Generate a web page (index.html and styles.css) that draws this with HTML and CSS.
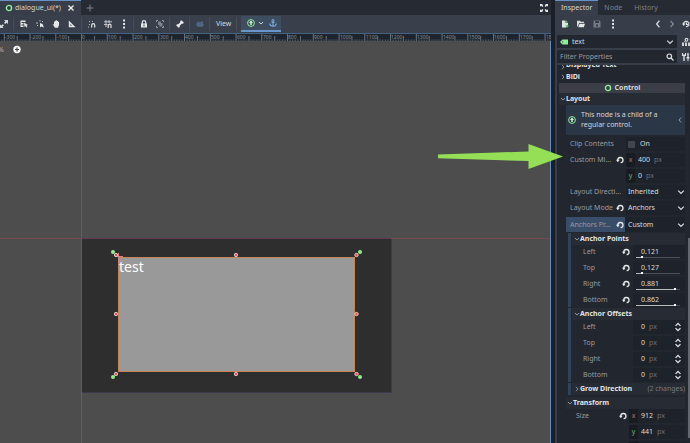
FILE: index.html
```html
<!DOCTYPE html>
<html lang="en">
<head>
<meta charset="utf-8">
<title>dialogue_ui(*)</title>
<link rel="stylesheet" href="styles.css">
</head>
<body>
<svg class="defs" aria-hidden="true">
  <symbol id="ring" viewBox="0 0 8 8"><circle cx="4" cy="4" r="2.6" fill="none" stroke="#8eef97" stroke-width="1.4"/></symbol>
  <symbol id="down" viewBox="0 0 8 8"><path d="M1.200 2.600 4 5.400l2.800-2.800" fill="none" stroke="currentColor" stroke-width="1.300"/></symbol>
  <symbol id="right" viewBox="0 0 8 8"><path d="M2.600 1 5.400 4 2.600 7" fill="none" stroke="currentColor" stroke-width="1.200"/></symbol>
  <symbol id="left" viewBox="0 0 8 8"><path d="M5.400.8 2.600 4l2.800 3.200" fill="none" stroke="currentColor" stroke-width="1.300"/></symbol>
  <symbol id="revert" viewBox="0 0 8 8"><path d="M1.800 4.300A2.600 2.600 0 1 1 4.600 6.700" fill="none" stroke="#e8e9ea" stroke-width="1.300"/><path d="M0 3.800h3.700L1.800 6.200z" fill="#e8e9ea"/></symbol>
  <symbol id="spin" viewBox="0 0 8 10"><path d="M1.500 3.900 4 1.500l2.500 2.400M1.500 6.100 4 8.500l2.500-2.400" fill="none" stroke="#dcdee0" stroke-width="1.300"/></symbol>
  <symbol id="anchored" viewBox="0 0 8 8"><circle cx="4" cy="4" r="3.400" fill="none" stroke="#8eef97" stroke-width="1"/><path d="M4 1.500 6 4H4.700v2H3.300V4H2z" fill="#d9f5dc"/></symbol>
  <symbol id="dots" viewBox="0 0 8 10"><path d="M3.100.6h1.900v1.900H3.100zM3.100 4.100h1.900V6H3.100zM3.100 7.600h1.900v1.900H3.100z" fill="#e8e9ea"/></symbol>
</svg>
<div class="app">
  <main class="editor">
    <nav class="tabs">
      <button class="tab active"><svg class="icon"><use href="#ring"/></svg>dialogue_ui(*)<svg class="icon close" viewBox="0 0 8 8"><path d="m1.500 1.500 5 5m0-5-5 5" stroke="#f0f0f0" stroke-width="1.300"/></svg></button>
      <button class="add" aria-label="New scene"><svg class="icon" viewBox="0 0 8 8"><path d="M4 .5v7M.5 4h7" stroke="#7f838a"/></svg></button>
      <button class="expand" aria-label="Distraction free mode"><svg class="icon" viewBox="0 0 8 8"><path d="M0 0h3L2.200.8l1.300 1.300-1 1L1 1.800l-1 1zM8 0v2.800l-1-1-1.500 1.300-1-1L5.800.8 5 0zM0 8V5.200l1 1 1.500-1.300 1 1L2.200 7.200 3 8zM8 8H5l.8-.8-1.300-1.300 1-1L7 6.200l1-1z" fill="#e6e7e8"/></svg></button>
    </nav>
    <div class="toolbar">
      <button aria-label="Scale"><svg class="icon" viewBox="0 0 8 8"><path d="M4 0h4v4L6.700 2.700 5.200 4 4 2.800l1.400-1.400zM0 8V4.500l1.200 1 1.600-1.300L4 5.400 2.400 6.800 3.500 8z" fill="#d6d8da"/></svg></button>
      <i class="sep"></i>
      <button aria-label="List select"><svg class="icon" viewBox="0 0 8 8"><path d="M.5.500h5v1.500h-5zM.5 3h3v1.500h-3zM.5 5.500h3V7h-3zM.5.500h1V7h-1zM4 2.500 8 5 6.500 5.500 7.500 7l-1 .5L5.500 6l-1 1z" fill="#e6e7e8"/></svg></button>
      <button aria-label="Pivot"><svg class="icon" viewBox="0 0 8 8"><path d="M4 3v4.500L5.200 6.500 8 7.500 6.500 4z" fill="#e6e7e8"/><path d="M0 3h2M4 0v1.500M2 5l-1 1M6 2l1-1" stroke="#b7babf"/></svg></button>
      <button aria-label="Pan"><svg class="icon" viewBox="0 0 8 8"><path d="M.5 4 2 4.500V1.500h1V.7h1V.3h1v.6h1v.9h1V5L6 7.700H3z" fill="#e6e7e8"/></svg></button>
      <button aria-label="Ruler"><svg class="icon" viewBox="0 0 8 8"><path fill-rule="evenodd" d="M.8.500 7.500 7.300H.8zM2.300 4v1.800H4z" fill="#e6e7e8"/></svg></button>
      <i class="sep"></i>
      <button aria-label="Smart snap"><svg class="icon" viewBox="0 0 8 8"><path d="M3.700 7.500V5.200a1.500 1.500 0 0 1 3 0v2.300" fill="none" stroke="#e6e7e8" stroke-width="1.200"/><path d="M1 1h1v1H1zM4 1h1v1H4zM1 4h1v1H1zM0 6.500h1v1H0z" fill="#b9bcc0"/></svg></button>
      <button aria-label="Grid snap"><svg class="icon" viewBox="0 0 8 8"><path d="M2 0v7M5 0v3M0 1.800h8M0 4.500h3.500" stroke="#c1c4c8"/><path d="M4.200 8V5.500a1.400 1.400 0 0 1 2.800 0V8" fill="none" stroke="#e6e7e8" stroke-width="1.200"/></svg></button>
      <button aria-label="Snapping options"><svg class="icon tall"><use href="#dots"/></svg></button>
      <i class="sep"></i>
      <button aria-label="Lock"><svg class="icon" viewBox="0 0 8 8"><path d="M2.300 4V2.300a1.700 1.700 0 0 1 3.400 0V4" fill="none" stroke="#e6e7e8" stroke-width="1.200"/><path fill-rule="evenodd" d="M1 3.500h6v4H1zm2.500 1v1.800h1V4.500z" fill="#e6e7e8"/></svg></button>
      <button aria-label="Group"><svg class="icon" viewBox="0 0 8 8"><path d="M.5 2V.5H2M6 .5h1.500V2M.5 6v1.500H2M6 7.500h1.500V6" fill="none" stroke="#9599a1"/><path d="M2 1.500h3V3h1.500v3.500H3.500V5H2z" fill="#7d828c"/></svg></button>
      <i class="sep"></i>
      <button aria-label="Skeleton"><svg class="icon" viewBox="0 0 8 8"><path d="m2 6 4-4" stroke="#f2f2f2" stroke-width="1.800"/><circle cx="1.500" cy="5.300" r="1.100" fill="#f2f2f2"/><circle cx="2.700" cy="6.500" r="1.100" fill="#f2f2f2"/><circle cx="5.300" cy="1.500" r="1.100" fill="#f2f2f2"/><circle cx="6.500" cy="2.700" r="1.100" fill="#f2f2f2"/></svg></button>
      <i class="sep"></i>
      <button aria-label="Bone rendering"><svg class="icon" viewBox="0 0 8 8"><path d="M0 4 1.500 2 3 1.500 4 2.500 5 1.500h2v2l1 1-1 2-3 .5-3-.5z" fill="#4b6689"/></svg></button>
      <i class="sep"></i>
      <button class="view">View</button>
      <i class="sep"></i>
      <div class="anchor-tools">
        <button aria-label="Anchor preset"><svg class="icon"><use href="#anchored"/></svg><svg class="caret"><use href="#down"/></svg></button>
        <button aria-label="Anchor mode"><svg class="icon" viewBox="0 0 8 8"><path d="M4 2.500v4.700M2.300 3.300h3.400M.8 4.500c.2 2 1.700 2.700 3.200 2.700s3-.7 3.200-2.700" fill="none" stroke="#79ace8" stroke-width="1.100"/><circle cx="4" cy="1.500" r="1" fill="none" stroke="#79ace8"/></svg></button>
      </div>
    </div>
    <svg class="ruler" aria-label="Ruler">
      <defs><pattern id="ticks" x="3.800" width="25.750" height="8" patternUnits="userSpaceOnUse">
        <path d="M.5 0v8" stroke="#6c747d"/><path d="M13.400 2v6" stroke="#68717a"/>
        <path d="M3.100 5.500V8M5.700 5.500V8M8.200 5.500V8M10.800 5.500V8M16 5.500V8M18.500 5.500V8M21.100 5.500V8M23.700 5.500V8" stroke="#6a727b" stroke-width=".8"/>
      </pattern></defs>
      <rect width="100%" height="8" fill="url(#ticks)"/>
      <g><text x="5" y="5">-300</text><text x="31" y="5">-200</text><text x="57" y="5">-100</text><text x="82" y="5">0</text><text x="108" y="5">100</text><text x="134" y="5">200</text><text x="160" y="5">300</text><text x="185" y="5">400</text><text x="211" y="5">500</text><text x="237" y="5">600</text><text x="263" y="5">700</text><text x="288" y="5">800</text><text x="314" y="5">900</text><text x="340" y="5">1000</text><text x="366" y="5">1100</text><text x="391" y="5">1200</text><text x="417" y="5">1300</text><text x="443" y="5">1400</text><text x="469" y="5">1500</text><text x="494" y="5">1600</text><text x="520" y="5">1700</text><text x="546" y="5">1800</text></g>
    </svg>
    <div class="canvas">
      <svg class="scene">
        <path d="M81.500 0v402" stroke="#5d6351"/>
        <rect x="82" y="197" width="309" height="154" fill="#2e2e2e"/>
        <path d="M82 351.500h309.500V197" fill="none" stroke="#3c3a4b"/>
        <path d="M0 197.500h82M391 197.500h160" stroke="#754a50"/><path d="M82 197.500h309" stroke="#633850"/>
        <rect x="118.500" y="216.500" width="236" height="114" fill="#999" stroke="#c78558"/>
        <path d="M115 215.500h8M118.500 212v10" stroke="#d98484"/>
        <g fill="#8eef8b"><circle cx="113" cy="211" r="2"/><circle cx="360" cy="211" r="2"/><circle cx="113" cy="336" r="2"/><circle cx="360" cy="336" r="2"/></g>
        <g fill="#f0524f" stroke="#d9c6c6" stroke-width="1"><circle cx="116" cy="214" r="1.700"/><circle cx="236" cy="214" r="1.700"/><circle cx="356.500" cy="214" r="1.700"/><circle cx="116" cy="273" r="1.700"/><circle cx="356.500" cy="273" r="1.700"/><circle cx="116" cy="333" r="1.700"/><circle cx="236" cy="333" r="1.700"/><circle cx="356.500" cy="333" r="1.700"/></g>
        <text class="test" x="119" y="231">test</text>
        <text class="zoom" x="-2" y="11">%</text>
        <circle cx="17" cy="8.500" r="3.700" fill="#f4f4f4"/><path d="M17 6.500v4M15 8.500h4" stroke="#484848" stroke-width="1.200"/>
      </svg>
      <svg class="arrow" viewBox="0 0 126 26"><path d="M0 10.500 90.500 7.500V0L125 12.500 90.500 25v-8L0 14.300z" fill="#95df57"/></svg>
    </div>
  </main>

  <aside class="inspector">
    <nav class="tabs">
      <button class="tab active">Inspector</button><button class="tab">Node</button><button class="tab">History</button>
    </nav>
    <div class="panel">
      <div class="resource">
        <button aria-label="New resource"><svg class="icon" viewBox="0 0 8 8"><path d="M1 .5h3.500V3H7v2H5v2.500H1z" fill="#e2e3e5"/><path d="M5 .5 7 2.500H5zM5.500 4.500h1v1h1v1h-1v1h-1v-1h-1v-1h1z" fill="#77e887"/></svg></button>
        <button aria-label="Open resource"><svg class="icon" viewBox="0 0 8 8"><path d="M0 7V.8h3l.8 1H7V3H2.200L1 6z" fill="#d8dadc"/><path d="M2.500 3.800H8L6.800 7.200H1.200z" fill="#e5e6e7"/></svg></button>
        <button aria-label="Save resource"><svg class="icon" viewBox="0 0 8 8"><path fill-rule="evenodd" d="M.5.500h6l1 1v6h-7zM2 1v2h4V1zM3 4.500v2h2v-2z" fill="#777c86"/></svg></button>
        <button aria-label="Extra options"><svg class="icon tall"><use href="#dots"/></svg></button>
        <span class="grow"></span>
        <button aria-label="Previous"><svg class="icon"><use href="#left"/></svg></button>
        <button class="dim" aria-label="Next"><svg class="icon"><use href="#right"/></svg></button>
        <button aria-label="History"><svg class="icon" viewBox="0 0 8 8"><path d="M1.500 4A2.700 2.700 0 1 1 4 6.700M4.500 2.500v2H6" fill="none" stroke="#e0e1e3" stroke-width="1.200"/><path d="M0 3.500h3.500L1.700 6z" fill="#e0e1e3"/></svg></button>
      </div>
      <div class="pick">
        <button class="field object"><svg class="icon" viewBox="0 0 8 8"><path fill-rule="evenodd" d="M0 4 2.500 1.500H8v5H2.500zM2.200 3.500v1h1v-1z" fill="#8eef97"/></svg>text<span class="grow"></span><svg class="icon"><use href="#down"/></svg></button>
        <button aria-label="Documentation"><svg class="icon" viewBox="0 0 8 8"><circle cx="4.500" cy="1.800" r="1.400" fill="none" stroke="#dfe0e2" stroke-width="1.100"/><path d="M0 4.500h2V8H0zM3 4.500h2V8H3zM6 4.500h2V8H6zM2 3.500 3.500 3l-1 1.500z" fill="#cfd1d4"/></svg></button>
      </div>
      <div class="pick">
        <label class="field"><input type="text" placeholder="Filter Properties" aria-label="Filter Properties"><svg class="icon" viewBox="0 0 8 8"><circle cx="3.300" cy="3.300" r="2.300" fill="none" stroke="#e0e1e3" stroke-width="1.200"/><path d="m5 5 2.500 2.500" stroke="#e0e1e3" stroke-width="1.300"/></svg></label>
        <button aria-label="Property tools"><svg class="icon" viewBox="0 0 8 8"><path d="M2 3v5M6 0v5" stroke="#dfe0e2" stroke-width="1.400"/><path d="M0 0h1v1.500h2V0h1v3H0zM4.500 4h3v1.500h-1V8h-1V5.500h-1z" fill="#dfe0e2"/></svg></button>
      </div>

      <div class="scroll">
        <div class="list">
          <h3 class="head cut"><svg class="caret"><use href="#right"/></svg>Displayed Text</h3>
          <h3 class="head first"><svg class="caret"><use href="#right"/></svg>BiDi</h3>
          <div class="category"><svg class="icon"><use href="#ring"/></svg>Control</div>
          <h3 class="head"><svg class="caret"><use href="#down"/></svg>Layout</h3>
          <div class="body">
            <div class="note"><svg class="icon"><use href="#anchored"/></svg><span>This node is a child of a regular control.</span><svg class="caret"><use href="#left"/></svg></div>
            <div class="rows">
              <div class="row"><label for="clip">Clip Contents</label><div class="value check"><input type="checkbox" id="clip"><span>On</span></div></div>
              <div class="row"><label for="minx">Custom Mi...</label><svg class="icon"><use href="#revert"/></svg><div class="value"><b class="x">x</b><input id="minx" value="400"><em>px</em></div></div>
              <div class="row"><span></span><div class="value"><b class="y">y</b><input aria-label="Minimum height" value="0" class="one"><em>px</em></div></div>
              <div class="row"><label for="dir">Layout Directi...</label><div class="value"><select id="dir"><option>Inherited</option></select><svg class="icon"><use href="#down"/></svg></div></div>
              <div class="row"><label for="mode">Layout Mode</label><svg class="icon"><use href="#revert"/></svg><div class="value"><select id="mode"><option>Anchors</option></select><svg class="icon"><use href="#down"/></svg></div></div>
              <div class="row selected"><label for="preset">Anchors Pr...</label><svg class="icon"><use href="#revert"/></svg><div class="value"><select id="preset"><option>Custom</option></select><svg class="icon"><use href="#down"/></svg></div></div>
            </div>
            <section class="group">
              <h3 class="head"><svg class="caret"><use href="#down"/></svg>Anchor Points</h3>
              <div class="rows">
                <div class="row"><label for="al">Left</label><svg class="icon"><use href="#revert"/></svg><div class="value slide"><input id="al" value="0.121"><i class="track"><i class="fill" style="width:15%"></i></i></div></div>
                <div class="row"><label for="at">Top</label><svg class="icon"><use href="#revert"/></svg><div class="value slide"><input id="at" value="0.127"><i class="track"><i class="fill" style="width:16%"></i></i></div></div>
                <div class="row"><label for="ar">Right</label><svg class="icon"><use href="#revert"/></svg><div class="value slide"><input id="ar" value="0.881"><i class="track"><i class="fill" style="width:92%"></i></i></div></div>
                <div class="row"><label for="ab">Bottom</label><svg class="icon"><use href="#revert"/></svg><div class="value slide"><input id="ab" value="0.862"><i class="track"><i class="fill" style="width:90%"></i></i></div></div>
              </div>
            </section>
            <section class="group">
              <h3 class="head"><svg class="caret"><use href="#down"/></svg>Anchor Offsets</h3>
              <div class="rows">
                <div class="row"><label for="ol">Left</label><div class="value offset"><input id="ol" value="0" class="one"><em>px</em><svg class="icon tall"><use href="#spin"/></svg></div></div>
                <div class="row"><label for="ot">Top</label><div class="value offset"><input id="ot" value="0" class="one"><em>px</em><svg class="icon tall"><use href="#spin"/></svg></div></div>
                <div class="row"><label for="or">Right</label><div class="value offset"><input id="or" value="0" class="one"><em>px</em><svg class="icon tall"><use href="#spin"/></svg></div></div>
                <div class="row"><label for="ob">Bottom</label><div class="value offset"><input id="ob" value="0" class="one"><em>px</em><svg class="icon tall"><use href="#spin"/></svg></div></div>
              </div>
            </section>
            <section class="group">
              <h3 class="head"><svg class="caret"><use href="#right"/></svg>Grow Direction<span class="changes">(2 changes)</span></h3>
            </section>
            <section class="transform">
              <h3 class="head"><svg class="caret"><use href="#down"/></svg>Transform</h3>
              <div class="rows">
                <div class="row"><label for="sx">Size</label><svg class="icon"><use href="#revert"/></svg><div class="value"><b class="x">x</b><input id="sx" value="912"><em>px</em></div></div>
                <div class="row"><span></span><div class="value"><b class="y">y</b><input aria-label="Height" value="441"><em>px</em></div></div>
                <div class="row"><span></span><div class="value"><b class="x"></b></div></div>
              </div>
            </section>
          </div>
        </div>
        <i class="bar"></i>
      </div>
    </div>
  </aside>
</div>
</body>
</html>
```
FILE: styles.css
```css
* { box-sizing: border-box; }
body { margin: 0; background: #1b2028; color: #d6d8da; font: 7px/10px "Noto Sans", sans-serif; overflow: hidden; }
button, input, select { font: inherit; color: inherit; background: none; border: 0; padding: 0; margin: 0; outline: 0; appearance: none; }
button { display: flex; align-items: center; justify-content: center; }
svg { display: block; flex: none; }
.defs { position: absolute; width: 0; height: 0; }
.icon { width: 8px; height: 8px; }
.icon.tall { height: 10px; }
.caret { width: 6px; height: 6px; }
.grow { flex: 1; }
.app { display: flex; gap: 4px; height: 100vh; }
.editor { flex: 1; min-width: 0; display: flex; flex-direction: column; }

.tabs { display: flex; height: 15px; background: #252a33; }
.tab { padding: 0 6px; color: #7d8188; border-top: 1px solid transparent; }
.tab.active { background: #373d49; color: #d6d8da; border-top-color: #6791c4; }
.editor .tab { gap: 2px; padding: 0 6px 0 5px; }
.close { margin-left: 4px; }
.add { width: 18px; }
.expand { margin-left: auto; width: 14px; }

.toolbar { display: flex; align-items: center; gap: 8px; height: 18px; background: #3a3f4c; overflow: hidden; }
.toolbar .sep { width: 1px; height: 14px; background: #484d59; margin: 0 -2px 0 -3px; }
.anchor-tools { display: flex; gap: 5px; height: 16px; padding: 0 4px 0 6px; margin-left: -2px; background: #3f4d60; border-bottom: 2px solid #6796cc; }
.anchor-tools button { gap: 3px; }

.ruler { width: 100%; height: 8px; background: #1e242d; border-top: 1px solid #456383; }
.ruler text { font: 5px "Noto Sans", sans-serif; fill: #858c93; }
.canvas { flex: 1; position: relative; background: #4d4d4d; border-right: 1px solid #628dbd; min-height: 0; }
.scene { width: 100%; height: 100%; }
.test { font: 14px "Noto Sans", sans-serif; fill: #fff; }
.zoom { font: 7px "Noto Sans", sans-serif; fill: #b5b5b5; }
.arrow { position: absolute; z-index: 2; right: -14px; top: 103px; width: 126px; height: 26px; }

.inspector { flex: 0 0 135px; min-width: 0; display: flex; flex-direction: column; overflow: hidden; }
.panel { flex: 1; min-height: 0; display: flex; flex-direction: column; gap: 2px; padding-left: 2px; background: #373d49; }
.resource { display: flex; align-items: center; gap: 8px; height: 18px; padding-left: 4px; }
.resource .dim { color: #888c95; }
.resource button:nth-of-type(n+6) { margin-left: -2px; }
.pick { display: flex; gap: 5px; height: 13px; overflow: hidden; }
.pick .field { flex: 1; min-width: 0; display: flex; align-items: center; gap: 4px; padding: 0 3px; background: #22262f; border-radius: 1px; }
.field input { flex: 1; min-width: 0; }
.field input::placeholder { color: #979aa1; opacity: 1; }
.scroll { flex: 1; min-height: 0; overflow: hidden; display: flex; justify-content: space-between; background: #21262f; padding-left: 2px; }
.list { width: 126px; }
.bar { width: 2px; height: 200px; margin-top: 173px; background: #626770; }
.list .caret { color: #9a9da3; }
.head { display: flex; align-items: center; height: 12px; margin: 0; padding-left: 1px; font-size: 7px; font-weight: 700; background: #262b34; color: #e2e3e5; }
.head.cut { height: 5px; align-items: flex-end; overflow: hidden; background: none; }
.head.first { background: none; height: 13px; }
.category { display: flex; align-items: center; justify-content: center; gap: 3px; height: 10px; background: #3b3e47; font-weight: 700; border-radius: 1px; }
.body { padding-left: 7px; }
.note { display: flex; align-items: center; gap: 5px; height: 30px; padding: 0 2px; margin-bottom: 2px; background: #2b3747; }
.note span { flex: 1; }
.rows { display: flex; flex-direction: column; gap: 2px; }
.row { display: flex; align-items: center; height: 14px; padding-left: 4px; color: #999ca2; }
.row > :first-child { flex: 1; min-width: 0; white-space: nowrap; }
.row > .icon { margin-right: 2px; }
.row.selected { height: 15px; background: linear-gradient(to right, #384d69 50%, #1d222a 50%); }
.value { flex: 0 0 59px; height: 14px; display: flex; align-items: center; background: #1e232b; color: #d9dbdd; }
.value input { width: 13px; min-width: 0; }
.value .one { width: 5px; }
.value select { flex: 1; min-width: 0; padding-left: 2px; }
.value em { font-style: normal; color: #6b6f76; margin-left: 3px; }
.value b { width: 9px; align-self: stretch; margin-right: 3px; background: #181c22; font-weight: 400; line-height: 14px; text-align: center; }
.value .x { color: #ad7467; }
.value .y { color: #6fae77; }
.check { gap: 5px; padding-left: 2px; }
.value input[type="checkbox"] { width: 7px; height: 7px; background: #42464f; border-radius: 1px; }
.group { border-left: 3px solid #304359; margin: 1px 0 0 2px; padding-left: 1px; }
.group .head { padding-left: 2px; }
.group .row { padding-left: 11px; }
.group .value { flex-basis: 52px; }
.group .row > .icon { margin-right: 3px; }
.slide { position: relative; padding-left: 8px; }
.value.slide input { width: 30px; }
.track { position: absolute; left: 3px; right: 5px; bottom: 1px; height: 1px; background: #4d5158; }
.fill { display: block; position: relative; height: 1px; background: #b8babd; }
.fill::after { content: ""; position: absolute; right: 0; top: -1px; width: 2px; height: 2px; background: #fff; }
.offset { padding-left: 8px; }
.offset .icon { margin-left: auto; margin-right: 3px; }
.changes { margin-left: auto; font-weight: 400; color: #767a81; }
.transform { margin-top: 2px; }
.transform .row { padding-left: 10px; }
.transform .value { flex-basis: 56px; }
```
